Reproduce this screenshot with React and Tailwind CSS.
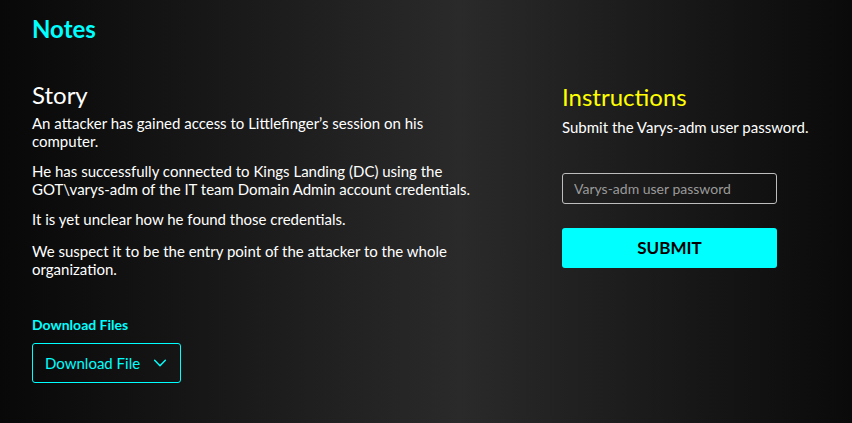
import React, { useState } from 'react';

const Chevron = () => (
  <svg className="w-4 h-4" fill="none" stroke="currentColor" viewBox="0 0 24 24">
    <path strokeLinecap="round" strokeLinejoin="round" strokeWidth={2.2} d="M4 8l8 8 8-8" />
  </svg>
);

const App = () => {
  const [password, setPassword] = useState('');

  return (
    <div
      className="min-h-[423px] w-full bg-[linear-gradient(to_right,#080808_0%,#2a2a2a_54%,#0a0a0a_100%)] px-8 pt-[15px] text-white"
      style={{ fontFamily: 'Lato, "Noto Sans", sans-serif' }}
    >
      {/* Header */}
      <h1 className="text-[24px] leading-[28px] font-bold text-[#00ffff]">Notes</h1>

      <div className="mt-[37px] flex">
        {/* Story */}
        <div className="w-[452px]">
          <h2 className="text-[24px] leading-[30px] font-normal">Story</h2>
          <div className="mt-[4px] space-y-[12px] text-[15px] leading-[18px]">
            <p>An attacker has gained access to Littlefinger’s session on his computer.</p>
            <p>He has successfully connected to Kings Landing (DC) using the GOT\varys-adm of the IT team Domain Admin account credentials.</p>
            <p>It is yet unclear how he found those credentials.</p>
            <p className="!mt-[14px]">We suspect it to be the entry point of the attacker to the whole organization.</p>
          </div>

          <h3 className="mt-[38px] text-[14px] leading-[18px] font-bold text-[#00ffff]">Download Files</h3>
          <button className="mt-[9px] flex h-[40px] w-[149px] items-center justify-between rounded-[3px] border border-[#00ffff] pl-[12px] pr-[12px] text-[15px] text-[#00ffff]">
            <span>Download File</span>
            <Chevron />
          </button>
        </div>

        {/* Instructions */}
        <div className="ml-[78px] w-[215px] pt-[2px]">
          <h2 className="text-[24px] leading-[30px] text-[#ffff00]">Instructions</h2>
          <p className="mt-[6px] text-[15px] leading-[18px] whitespace-nowrap">Submit the Varys-adm user password.</p>
          <input
            type="password"
            value={password}
            onChange={(e) => setPassword(e.target.value)}
            placeholder="Varys-adm user password"
            className="mt-[37px] h-[31px] w-full rounded-[3px] border border-[#bdbdbd] bg-transparent px-[11px] text-[14px] text-white placeholder-[#9a9a9a] focus:outline-none"
          />
          <button className="mt-[24px] h-[40px] w-full rounded-[3px] bg-[#00ffff] text-[17px] font-bold text-black">
            SUBMIT
          </button>
        </div>
      </div>
    </div>
  );
};

export default App;
